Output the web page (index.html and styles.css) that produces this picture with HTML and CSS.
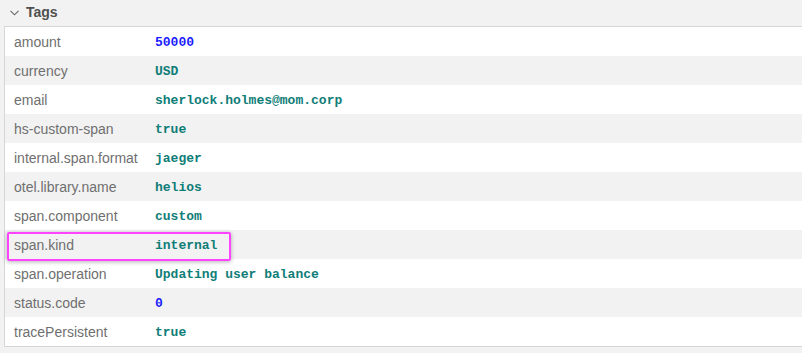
FILE: index.html
```html
<!DOCTYPE html>
<html>
<head>
<meta charset="utf-8">
<link rel="stylesheet" href="styles.css">
</head>
<body>
<div class="section">
  <div class="header">
    <svg class="chev" width="9" height="6" viewBox="0 0 9 6"><path d="M0.5 0.8 L4.5 4.8 L8.5 0.8" fill="none" stroke="#666" stroke-width="1.1"/></svg>
    <span class="title">Tags</span>
  </div>
  <div class="table">
    <div class="row"><div class="key">amount</div><div class="val num">50000</div></div>
    <div class="row"><div class="key">currency</div><div class="val">USD</div></div>
    <div class="row"><div class="key">email</div><div class="val">sherlock.holmes@mom.corp</div></div>
    <div class="row"><div class="key">hs-custom-span</div><div class="val">true</div></div>
    <div class="row"><div class="key">internal.span.format</div><div class="val">jaeger</div></div>
    <div class="row"><div class="key">otel.library.name</div><div class="val">helios</div></div>
    <div class="row"><div class="key">span.component</div><div class="val">custom</div></div>
    <div class="row hl"><div class="key">span.kind</div><div class="val">internal</div><div class="mark"></div></div>
    <div class="row"><div class="key">span.operation</div><div class="val">Updating user balance</div></div>
    <div class="row"><div class="key">status.code</div><div class="val num">0</div></div>
    <div class="row"><div class="key">tracePersistent</div><div class="val">true</div></div>
  </div>
</div>
</body>
</html>
```
FILE: styles.css
```css
html, body {
  margin: 0;
  padding: 0;
  background: #f2f2f2;
  width: 802px;
  height: 353px;
  overflow: hidden;
}
.section {
  padding-left: 4px;
  font-family: "Liberation Sans", Arial, sans-serif;
}
.header {
  height: 26px;
  display: flex;
  align-items: center;
  gap: 7px;
  padding-left: 6px;
  box-sizing: border-box;
  padding-bottom: 2px;
}
.chev { margin-top: 1px; }
.title {
  font-size: 14px;
  font-weight: bold;
  color: #505050;
}
.table {
  border: 1px solid #d6d6d6;
  border-right: none;
  background: #fff;
}
.row {
  position: relative;
  display: flex;
  align-items: center;
  height: 29px;
}
.row:nth-child(even) { background: #f2f2f2; }
.key {
  width: 141px;
  padding-left: 9px;
  font-size: 14px;
  color: #6f6f6f;
}
.val {
  font-family: "Liberation Mono", "Courier New", monospace;
  font-size: 13px;
  font-weight: bold;
  color: #0f7d78;
  padding-top: 1px;
}
.val.num { color: #1a1aff; }
.mark {
  position: absolute;
  left: 2px;
  top: 2px;
  width: 220px;
  height: 25px;
  border: 2px solid #ff44ff;
  border-radius: 2px;
  box-shadow: 0 1px 4px rgba(0,0,0,0.3);
}
```
